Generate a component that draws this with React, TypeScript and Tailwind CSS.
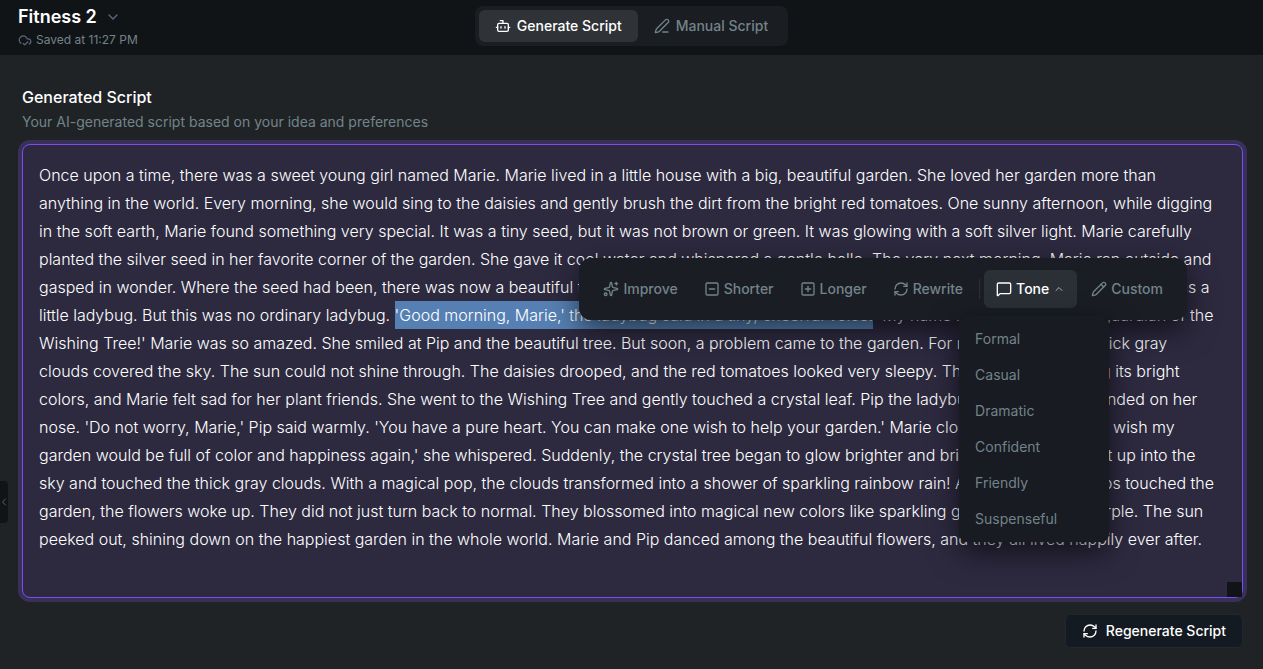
import { useEffect, useRef, useState } from "react";
import {
  Bot,
  ChevronDown,
  ChevronLeft,
  ChevronUp,
  CloudCheck,
  MessageSquare,
  PenLine,
  Pencil,
  RefreshCw,
  Sparkles,
  SquareMinus,
  SquarePlus,
} from "lucide-react";

const SCRIPT =
  "Once upon a time, there was a sweet young girl named Marie. Marie lived in a little house with a big, beautiful garden. She loved her garden more than anything in the world. Every morning, she would sing to the daisies and gently brush the dirt from the bright red tomatoes. One sunny afternoon, while digging in the soft earth, Marie found something very special. It was a tiny seed, but it was not brown or green. It was glowing with a soft silver light. Marie carefully planted the silver seed in her favorite corner of the garden. She gave it cool water and whispered a gentle hello. The very next morning, Marie ran outside and gasped in wonder. Where the seed had been, there was now a beautiful tree made of bright, clear crystal. Sitting on the very lowest shining thin branch was a little ladybug. But this was no ordinary ladybug. 'Good morning, Marie,' the ladybug said in a tiny, cheerful voice. 'My name is Pip, and I am the guardian of the Wishing Tree!' Marie was so amazed. She smiled at Pip and the beautiful tree. But soon, a problem came to the garden. For many days, misty, thick gray clouds covered the sky. The sun could not shine through. The daisies drooped, and the red tomatoes looked very sleepy. The garden was losing its bright colors, and Marie felt sad for her plant friends. She went to the Wishing Tree and gently touched a crystal leaf. Pip the ladybug flew down and landed on her nose. 'Do not worry, Marie,' Pip said warmly. 'You have a pure heart. You can make one wish to help your garden.' Marie closed her eyes tight. 'I wish my garden would be full of color and happiness again,' she whispered. Suddenly, the crystal tree began to glow brighter and brighter. Pure light shot up into the sky and touched the thick gray clouds. With a magical pop, the clouds transformed into a shower of sparkling rainbow rain! As the shiny raindrops touched the garden, the flowers woke up. They did not just turn back to normal. They blossomed into magical new colors like sparkling gold, orange, and purple. The sun peeked out, shining down on the happiest garden in the whole world. Marie and Pip danced among the beautiful flowers, and they all lived happily ever after.";

const SELECTED =
  "'Good morning, Marie,' the ladybug said in a tiny, cheerful voice.";

const TONES = [
  "Formal",
  "Casual",
  "Dramatic",
  "Confident",
  "Friendly",
  "Suspenseful",
];

const toolClass =
  "flex h-[38px] items-center gap-1 rounded-md px-3 text-sm font-medium text-[#73838a] hover:text-white";

function Header() {
  return (
    <header className="grid h-[55px] grid-cols-[1fr_auto_1fr] bg-[#111417]">
      <div className="flex flex-col gap-[3px] pt-[5px] pl-[18px]">
        <button className="flex items-center gap-2 self-start text-lg leading-6 font-semibold text-white">
          Fitness 2
          <ChevronDown className="size-4 text-[#5b6880]" />
        </button>
        <p className="flex items-center gap-1 text-xs text-[#73838a]">
          <CloudCheck className="size-3.5 text-[#5b6880]" />
          Saved at 11:27 PM
        </p>
      </div>
      <nav className="mt-1.5 flex self-start rounded-lg bg-[#1a1d21] p-1 text-sm font-medium">
        <button className="flex h-8 items-center gap-1.5 rounded-md bg-[#2f3337] px-4 text-white">
          <Bot className="size-4" />
          Generate Script
        </button>
        <button className="flex h-8 items-center gap-1.5 rounded-md px-4 text-[#73838a]">
          <PenLine className="size-4" />
          Manual Script
        </button>
      </nav>
    </header>
  );
}

function ToneMenu() {
  const [open, setOpen] = useState(true);

  return (
    <div className="relative">
      <button
        aria-expanded={open}
        onClick={() => setOpen(!open)}
        className="flex h-[38px] items-center gap-1 rounded-md bg-[#2b3037] px-3 text-sm font-medium text-white"
      >
        <MessageSquare className="size-4" />
        Tone
        <ChevronUp className="size-3 text-[#a9b0b5]" />
      </button>
      {open && (
        <div className="absolute top-[46px] left-[-25px] flex w-[150px] flex-col rounded-lg bg-[#181b21] py-[5px] shadow-[0_10px_30px_rgba(0,0,0,0.6)]">
          {TONES.map((tone) => (
            <button
              key={tone}
              className="px-4 py-2 text-left text-sm text-[#73838a] hover:text-white"
            >
              {tone}
            </button>
          ))}
        </div>
      )}
    </div>
  );
}

function SelectionToolbar() {
  return (
    <div className="absolute top-[114px] right-14 flex items-center gap-0.5 rounded-xl bg-[#1a1d24] p-3 shadow-[0_10px_30px_rgba(0,0,0,0.6)]">
      <button className={toolClass}>
        <Sparkles className="size-4" />
        Improve
      </button>
      <button className={toolClass}>
        <SquareMinus className="size-4" />
        Shorter
      </button>
      <button className={toolClass}>
        <SquarePlus className="size-4" />
        Longer
      </button>
      <button className={toolClass}>
        <RefreshCw className="size-4" />
        Rewrite
      </button>
      <div className="mx-0.5 h-5 w-px bg-[#2b3037]" />
      <ToneMenu />
      <button className={toolClass}>
        <Pencil className="size-4" />
        Custom
      </button>
    </div>
  );
}

export default function App() {
  const editorRef = useRef<HTMLTextAreaElement>(null);

  useEffect(() => {
    const start = SCRIPT.indexOf(SELECTED);
    editorRef.current?.focus({ preventScroll: true });
    editorRef.current?.setSelectionRange(start, start + SELECTED.length);
  }, []);

  return (
    <div className="relative min-h-screen bg-[#202326] font-['Inter',sans-serif]">
      <Header />
      <main className="pt-[30px] pr-5 pb-5 pl-[22px]">
        <label
          htmlFor="script"
          className="block text-base font-medium text-white"
        >
          Generated Script
        </label>
        <p className="mt-[3px] text-sm text-[#73838a]">
          Your AI-generated script based on your idea and preferences
        </p>
        <div className="relative mt-3">
          <textarea
            id="script"
            ref={editorRef}
            defaultValue={SCRIPT}
            spellCheck={false}
            className="block h-[454px] w-full resize-none rounded-lg border border-[#7c4df0] bg-[#2d2a40] py-4 pr-[22px] pl-4 text-base leading-7 font-light text-white ring-4 ring-[#392f5b] outline-none selection:bg-[#5680b3] selection:text-white"
          />
          <div className="absolute right-px bottom-px size-[15px] bg-[#111417]" />
          <SelectionToolbar />
        </div>
        <div className="mt-4 flex justify-end">
          <button className="flex h-[34px] items-center gap-2 rounded-md border border-[#20272f] bg-[#131a22] px-4 text-sm font-medium text-white">
            <RefreshCw className="size-4" />
            Regenerate Script
          </button>
        </div>
      </main>
      <button
        aria-label="Open sidebar"
        className="absolute top-[481px] left-0 flex h-[42px] w-2 items-center justify-center overflow-hidden rounded-r bg-[#111417] text-[#5b6367]"
      >
        <ChevronLeft className="size-3 shrink-0" />
      </button>
    </div>
  );
}
